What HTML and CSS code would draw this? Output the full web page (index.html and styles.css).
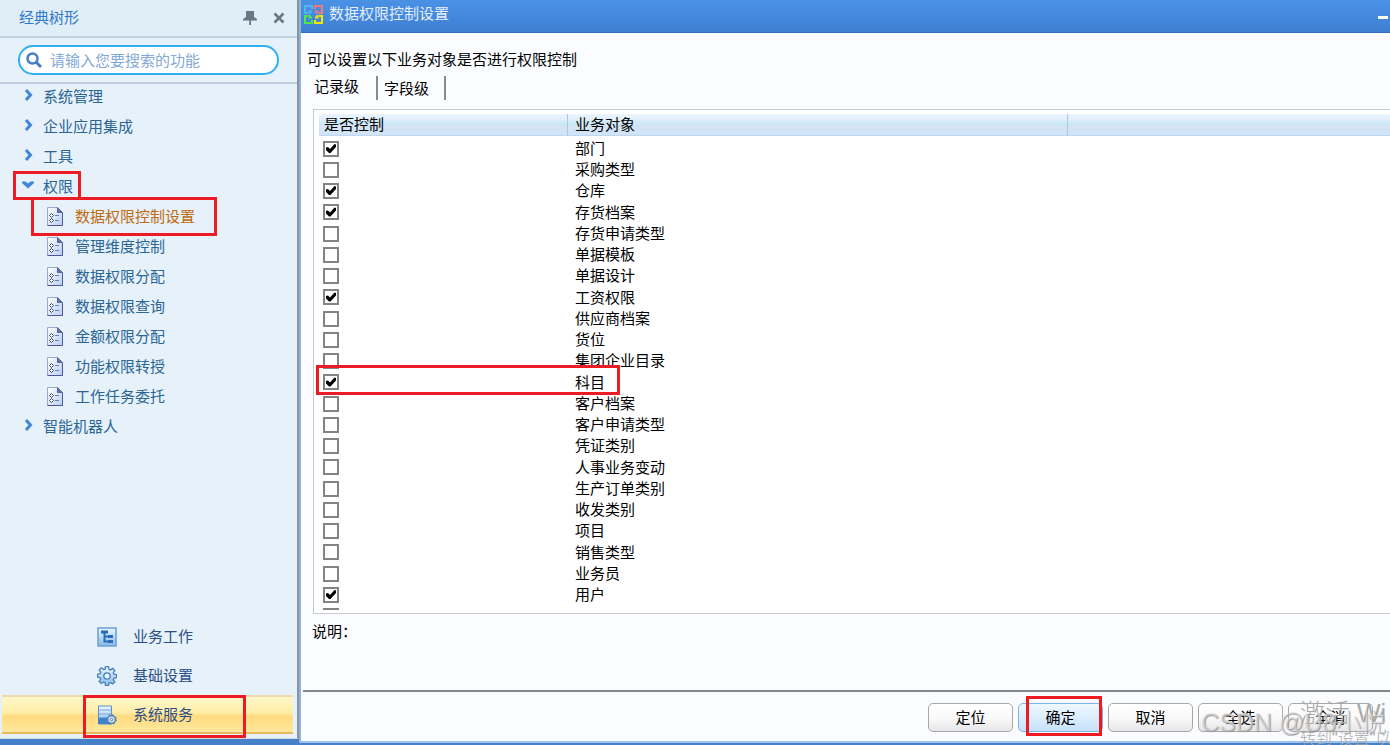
FILE: index.html
```html
<!DOCTYPE html>
<html lang="zh-CN">
<head>
    <meta charset="UTF-8">
    <meta name="viewport" content="width=device-width, initial-scale=1.0">
    <title>数据权限控制设置</title>
    <link rel="stylesheet" href="styles.css">
</head>
<body>
    <!-- Shared icons -->
    <svg class="icon-defs" aria-hidden="true">
        <defs>
            <linearGradient id="paper" x1="0" y1="0" x2="1" y2="1">
                <stop offset="0" stop-color="#ffffff"/>
                <stop offset="1" stop-color="#b9cdf0"/>
            </linearGradient>
            <linearGradient id="sky" x1="0" y1="0" x2="0" y2="1">
                <stop offset="0" stop-color="#eef7ff"/>
                <stop offset="1" stop-color="#86b8ea"/>
            </linearGradient>
        </defs>
        <symbol id="doc" viewBox="0 0 16 19">
            <path d="M.5.5h10l5 5v13H.5z" fill="url(#paper)" stroke="#9aabd0"/>
            <path d="M.5 18.5h15V6" fill="none" stroke="#4f5596"/>
            <path d="M10.500.5v5h5z" fill="#6670ab" stroke="#5c659f"/>
            <path d="M4.500 6.500l2 2-2 2-2-2zM4.500 11.500l2 2-2 2-2-2z" fill="#fff" stroke="#3c4666"/>
            <path d="M8 8.500h4M8 13.500h4" stroke="#5f83c0"/>
        </symbol>
        <symbol id="arrow-right" viewBox="0 0 10 12">
            <path d="M2 1l4.500 5L2 11" fill="none" stroke="#3f86d8" stroke-width="3"/>
        </symbol>
        <symbol id="arrow-down" viewBox="0 0 12 8">
            <path d="M0 0.500h3.500L6 2.500l2.500-2H12v1.500L6 7.500 0 2z" fill="#3f86d8"/>
        </symbol>
    </svg>

    <div class="app">
        <aside class="sidebar">
            <div class="sidebar-header">
                <span class="sidebar-title">经典树形</span>
                <button type="button" class="icon-btn" aria-label="固定">
                    <svg width="14" height="14" viewBox="0 0 14 14"><path d="M3 0h8v6l3 2v1.500H8V14H6.200V9.500H0V8l3-2z" fill="#687782"/></svg>
                </button>
                <button type="button" class="icon-btn" aria-label="关闭">
                    <svg width="12" height="12" viewBox="0 0 12 12"><path d="M1.500 1.500l9 9M10.500 1.500l-9 9" stroke="#687782" stroke-width="2.600"/></svg>
                </button>
            </div>
            <div class="search-area">
                <label class="search-box">
                    <svg width="16" height="16" viewBox="0 0 16 16"><circle cx="6.500" cy="6.500" r="5" fill="none" stroke="#457ec8" stroke-width="2.500"/><path d="M10 10l5 5" stroke="#457ec8" stroke-width="3"/></svg>
                    <input type="text" class="search-input" placeholder="请输入您要搜索的功能" aria-label="搜索功能">
                </label>
            </div>

            <ul class="tree">
                <li><a href="#" class="tree-item"><svg class="arrow"><use href="#arrow-right"/></svg>系统管理</a></li>
                <li><a href="#" class="tree-item"><svg class="arrow"><use href="#arrow-right"/></svg>企业应用集成</a></li>
                <li><a href="#" class="tree-item"><svg class="arrow"><use href="#arrow-right"/></svg>工具</a></li>
                <li>
                    <a href="#" class="tree-item"><svg class="arrow arrow-down"><use href="#arrow-down"/></svg>权限<span class="mark mark-group"></span></a>
                    <ul class="subtree">
                        <li><a href="#" class="tree-item active"><svg class="doc"><use href="#doc"/></svg>数据权限控制设置<span class="mark mark-item"></span></a></li>
                        <li><a href="#" class="tree-item"><svg class="doc"><use href="#doc"/></svg>管理维度控制</a></li>
                        <li><a href="#" class="tree-item"><svg class="doc"><use href="#doc"/></svg>数据权限分配</a></li>
                        <li><a href="#" class="tree-item"><svg class="doc"><use href="#doc"/></svg>数据权限查询</a></li>
                        <li><a href="#" class="tree-item"><svg class="doc"><use href="#doc"/></svg>金额权限分配</a></li>
                        <li><a href="#" class="tree-item"><svg class="doc"><use href="#doc"/></svg>功能权限转授</a></li>
                        <li><a href="#" class="tree-item"><svg class="doc"><use href="#doc"/></svg>工作任务委托</a></li>
                    </ul>
                </li>
                <li><a href="#" class="tree-item"><svg class="arrow"><use href="#arrow-right"/></svg>智能机器人</a></li>
            </ul>

            <nav class="modules">
                <a href="#" class="module">
                    <svg width="20" height="20" viewBox="0 0 20 20"><path d="M1 1h18v18H1z" fill="url(#sky)" stroke="#6c9fd0" stroke-width="1.500"/><path d="M4 3.500h7v3H4zM11 8h5v3h-5zM11 13h5v3h-5z" fill="#2a6db5"/><path d="M7.500 6v8.500H11M7.500 9.500H11" fill="none" stroke="#2a6db5" stroke-width="2"/></svg>
                    业务工作
                </a>
                <a href="#" class="module">
                    <svg width="20" height="20" viewBox="0 0 20 20"><path d="M8.500.7h3l.5 2.600 1.500.6 2.200-1.500 2.100 2.100-1.500 2.200.6 1.500 2.600.5v3l-2.600.5-.6 1.500 1.500 2.200-2.100 2.100-2.200-1.500-1.500.6-.5 2.600h-3L8 16.600 6.500 16l-2.200 1.500-2.100-2.100 1.500-2.200-.6-1.500-2.600-.5v-3l2.600-.5.6-1.500-1.500-2.200 2.100-2.100 2.200 1.500L8 3.300z" fill="url(#sky)" stroke="#467fb9" stroke-width="1.300"/><circle cx="10" cy="10" r="3.200" fill="#e7f2fb" stroke="#467fb9" stroke-width="1.300"/></svg>
                    基础设置
                </a>
                <a href="#" class="module active">
                    <svg width="20" height="20" viewBox="0 0 20 20"><path d="M1.500 1h13v18h-13z" fill="url(#sky)" stroke="#5b8fc8"/><path d="M2 5h12M2 9h12" stroke="#79a8d8"/><path d="M1.500 12.500h13V19h-13z" fill="#3f82cc"/><circle cx="14.500" cy="14.500" r="3.800" fill="#e8f2fc" stroke="#5584b8" stroke-width="1.500"/><circle cx="14.500" cy="14.500" r="4.700" fill="none" stroke="#5584b8" stroke-width="1.300" stroke-dasharray="2 1.700"/><circle cx="14.500" cy="14.500" r="1.300" fill="#fff" stroke="#44719f"/></svg>
                    系统服务<span class="mark mark-module"></span>
                </a>
            </nav>
        </aside>

        <main class="window">
            <header class="title-bar">
                <svg width="19" height="19" viewBox="0 0 19 19" fill="none" stroke-width="2">
                    <path d="M8 4V1H1v7h3M8 6.500H5.500V9" stroke="#55b5ee"/>
                    <path d="M11 4V1h7v7h-3M11 6.500h2.500V9" stroke="#ee7b75"/>
                    <path d="M8 15v3H1v-7h3M8 12.500H5.500V10" stroke="#55e34d"/>
                    <path d="M11 15v3h7v-7h-3M11 12.500h2.500V10" stroke="#f3e600"/>
                </svg>
                <h1 class="window-title">数据权限控制设置</h1>
                <button type="button" class="minimize" aria-label="最小化"></button>
            </header>

            <div class="window-body">
                <p class="hint">可以设置以下业务对象是否进行权限控制</p>
                <div class="tabs" role="tablist">
                    <button type="button" class="tab selected" role="tab" aria-selected="true">记录级</button>
                    <button type="button" class="tab" role="tab" aria-selected="false">字段级</button>
                </div>

                <div class="list-frame">
                    <div class="list-scroll">
                        <table class="list">
                            <thead>
                                <tr><th class="col-check">是否控制</th><th class="col-name">业务对象</th><th></th></tr>
                            </thead>
                            <tbody>
                                <tr><td><input type="checkbox" id="o1" checked></td><td colspan="2"><label for="o1">部门</label></td></tr>
                                <tr><td><input type="checkbox" id="o2"></td><td colspan="2"><label for="o2">采购类型</label></td></tr>
                                <tr><td><input type="checkbox" id="o3" checked></td><td colspan="2"><label for="o3">仓库</label></td></tr>
                                <tr><td><input type="checkbox" id="o4" checked></td><td colspan="2"><label for="o4">存货档案</label></td></tr>
                                <tr><td><input type="checkbox" id="o5"></td><td colspan="2"><label for="o5">存货申请类型</label></td></tr>
                                <tr><td><input type="checkbox" id="o6"></td><td colspan="2"><label for="o6">单据模板</label></td></tr>
                                <tr><td><input type="checkbox" id="o7"></td><td colspan="2"><label for="o7">单据设计</label></td></tr>
                                <tr><td><input type="checkbox" id="o8" checked></td><td colspan="2"><label for="o8">工资权限</label></td></tr>
                                <tr><td><input type="checkbox" id="o9"></td><td colspan="2"><label for="o9">供应商档案</label></td></tr>
                                <tr><td><input type="checkbox" id="o10"></td><td colspan="2"><label for="o10">货位</label></td></tr>
                                <tr><td><input type="checkbox" id="o11"></td><td colspan="2"><label for="o11">集团企业目录</label></td></tr>
                                <tr class="marked"><td><input type="checkbox" id="o12" checked><span class="mark mark-row"></span></td><td colspan="2"><label for="o12">科目</label></td></tr>
                                <tr><td><input type="checkbox" id="o13"></td><td colspan="2"><label for="o13">客户档案</label></td></tr>
                                <tr><td><input type="checkbox" id="o14"></td><td colspan="2"><label for="o14">客户申请类型</label></td></tr>
                                <tr><td><input type="checkbox" id="o15"></td><td colspan="2"><label for="o15">凭证类别</label></td></tr>
                                <tr><td><input type="checkbox" id="o16"></td><td colspan="2"><label for="o16">人事业务变动</label></td></tr>
                                <tr><td><input type="checkbox" id="o17"></td><td colspan="2"><label for="o17">生产订单类别</label></td></tr>
                                <tr><td><input type="checkbox" id="o18"></td><td colspan="2"><label for="o18">收发类别</label></td></tr>
                                <tr><td><input type="checkbox" id="o19"></td><td colspan="2"><label for="o19">项目</label></td></tr>
                                <tr><td><input type="checkbox" id="o20"></td><td colspan="2"><label for="o20">销售类型</label></td></tr>
                                <tr><td><input type="checkbox" id="o21"></td><td colspan="2"><label for="o21">业务员</label></td></tr>
                                <tr><td><input type="checkbox" id="o22" checked></td><td colspan="2"><label for="o22">用户</label></td></tr>
                                <tr><td><input type="checkbox" id="o23" aria-label="业务对象"></td><td colspan="2"></td></tr>
                            </tbody>
                        </table>
                    </div>
                </div>
                <p class="note">说明：</p>
            </div>

            <footer class="actions">
                <button type="button" class="btn">定位</button>
                <button type="button" class="btn primary">确定<span class="mark mark-btn"></span></button>
                <button type="button" class="btn">取消</button>
                <button type="button" class="btn">全选</button>
                <button type="button" class="btn">全消</button>
            </footer>
        </main>

        <!-- Watermarks over the bottom right corner -->
        <div class="activate">
            <div class="activate-title">激活 Wi</div>
            <div class="activate-text">转到"设置"以</div>
        </div>
        <div class="csdn">CSDN @U8小悦</div>
    </div>
</body>
</html>
```

FILE: styles.css
```css
* {
    box-sizing: border-box;
}
body, html {
    margin: 0;
    padding: 0;
    height: 100%;
}
body {
    font-family: "Liberation Sans", "Noto Sans CJK SC", sans-serif;
    font-size: 15px;
    line-height: 20px;
    color: #000;
}
button, input {
    font: inherit;
    color: inherit;
}
button {
    padding: 0;
    border: none;
    background: none;
}
a {
    color: inherit;
    text-decoration: none;
}
ul, p, h1 {
    margin: 0;
    padding: 0;
    list-style: none;
}
.icon-defs {
    position: absolute;
    width: 0;
    height: 0;
}
.app {
    position: relative;
    display: flex;
    height: 100vh;
    padding-bottom: 2px;
    overflow: hidden;
    background-color: #4580c8;
}

/* Left panel */
.sidebar {
    display: flex;
    flex-direction: column;
    flex: none;
    width: 299px;
    margin-bottom: 4px;
    padding-bottom: 4px;
    border-right: 2px solid #8b939b;
    border-bottom: 1px solid #d5d9de;
    background-color: #e6f1fa;
}
.sidebar-header {
    display: flex;
    align-items: center;
    gap: 16px;
    height: 38px;
    padding: 0 12px 0 19px;
    border-bottom: 2px solid #c3d2e1;
    background-color: #e0eef7;
}
.sidebar-title {
    flex: 1;
    color: #2f78cc;
}
.icon-btn {
    display: flex;
}
.search-area {
    height: 46px;
    padding: 7px 18px;
    border-bottom: 2px solid #bccddf;
}
.search-box {
    display: flex;
    align-items: center;
    gap: 8px;
    height: 30px;
    padding: 0 6px;
    border: 2px solid #2fb0f5;
    border-radius: 15px;
    background-color: #fff;
}
.search-input {
    flex: 1;
    min-width: 0;
    padding: 2px 0 0;
    border: none;
    outline: none;
    background: none;
}
.search-input::placeholder {
    color: #83a9d6;
}

/* Function tree */
.tree {
    flex: 1;
}
.tree-item {
    position: relative;
    display: flex;
    align-items: center;
    height: 26px;
    margin-bottom: 4px;
    padding-left: 22px;
    color: #2a6595;
}
.subtree .tree-item {
    padding-left: 47px;
}
.tree-item.active {
    color: #c06a10;
}
.arrow {
    width: 10px;
    height: 12px;
    margin: 0 9px 4px 2px;
}
.arrow-down {
    width: 12px;
    height: 8px;
    margin: 0 9px 4px 0;
}
.doc {
    width: 16px;
    height: 19px;
    margin: 0 12px 2px 0;
}

/* Module switch */
.module {
    position: relative;
    display: flex;
    align-items: center;
    gap: 16px;
    height: 39px;
    margin: 0 4px 0 2px;
    padding-left: 95px;
    color: #2b4f86;
}
.module.active {
    border-top: 2px solid #f0d9ab;
    border-bottom: 2px solid #e8b95e;
    background: linear-gradient(#fff8cc, #ffeda6 45%, #ffdb80 55%, #ffe89c);
}

/* Main window */
.window {
    display: flex;
    flex-direction: column;
    flex: 1;
    min-width: 0;
    border-left: 2px solid #8db3e3;
    border-bottom: 2px solid #9cc3ee;
    background-color: #fbfcff;
}
.title-bar {
    display: flex;
    align-items: center;
    gap: 6px;
    height: 33px;
    padding: 0 2px 4px 3px;
    border-bottom: 1px solid #3470c0;
    background: linear-gradient(#4a92e6, #3f7fd2);
}
.window-title {
    flex: 1;
    font-size: 15px;
    font-weight: normal;
    color: #e4effc;
}
.minimize {
    width: 10px;
    height: 3px;
    margin-top: 6px;
    background-color: #fff;
}
.window-body {
    display: flex;
    flex-direction: column;
    flex: 1;
    min-height: 0;
    padding: 17px 0 0 6px;
}
.tabs {
    display: flex;
    height: 24px;
    margin: 6px 0 9px;
}
.tab {
    width: 68px;
    padding: 1px 0 0 6px;
    border-right: 2px solid #8a8a8a;
    text-align: left;
}
.tab.selected {
    width: 71px;
    padding: 0 0 2px 7px;
}

/* Object list */
.list-frame {
    flex: 1;
    min-height: 0;
    margin-left: 6px;
    padding: 4px 0 3px;
    border: 1px solid #c8ccd2;
    border-right: none;
    background-color: #fff;
}
.list-scroll {
    height: 100%;
    padding-left: 5px;
    overflow: hidden;
}
.list {
    width: 100%;
    table-layout: fixed;
    border-collapse: separate;
    border-spacing: 0;
    line-height: 21px;
}
.list th {
    height: 21px;
    padding: 0 0 0 5px;
    border-bottom: 1px solid #bcd8f2;
    background: linear-gradient(#eaf5fe, #dfedfa 33%, #cdebf9 34%, #cdebf9 48%, #d2e4f6 50%);
    font-weight: normal;
    text-align: left;
}
.list .col-check {
    width: 249px;
}
.list .col-name {
    width: 500px;
    padding-left: 7px;
}
.list .col-check, .list .col-name {
    border-right: 1px solid #a9c8e6;
}
.list tbody::before {
    content: "";
    display: table-row;
    height: 2px;
}
.list td {
    height: 21px;
    padding: 0 0 0 4px;
    vertical-align: middle;
}
.list td + td {
    padding-left: 7px;
}
/* the row grid is slightly looser than 21px */
.list tr:nth-child(4n) td {
    height: 22px;
}
.list label {
    display: block;
}
.list input {
    display: block;
    appearance: none;
    width: 16px;
    height: 16px;
    margin: 0;
    border: 2px solid #848484;
    background-color: #fff;
}
.list input:checked::before {
    content: "";
    display: block;
    width: 10px;
    height: 10px;
    margin: 1px;
    background-color: #000;
    clip-path: polygon(0 40%, 20% 35%, 40% 55%, 85% 5%, 100% 10%, 100% 35%, 45% 95%, 30% 95%, 0 65%);
}
.list .marked {
    position: relative;
}
.note {
    height: 76px;
    padding: 8px 0 0 5px;
}

/* Bottom buttons */
.actions {
    display: flex;
    justify-content: flex-end;
    gap: 5px;
    height: 51px;
    margin-left: 2px;
    padding: 11px 17px 0 0;
    border-top: 2px solid #858888;
}
.btn {
    position: relative;
    width: 85px;
    height: 29px;
    border: 1px solid #a8a8a8;
    border-radius: 5px;
    background: linear-gradient(#fff, #fafafa 50%, #e6e6e8);
}
.btn.primary {
    border-color: #7db4e8;
    background: linear-gradient(#eef8ff, #dceefe 50%, #c6e2fb);
}

/* Red frames */
.mark {
    position: absolute;
    border: 3px solid #ed1c24;
    pointer-events: none;
}
.mark-group {
    top: -3px;
    left: 13px;
    width: 68px;
    height: 29px;
}
.mark-item {
    top: -7px;
    left: 31px;
    width: 186px;
    height: 39px;
    z-index: 1;
}
.mark-module {
    top: -2px;
    left: 81px;
    width: 163px;
    height: 43px;
}
.mark-row {
    top: -6px;
    left: -3px;
    width: 304px;
    height: 30px;
}
.mark-btn {
    top: -8px;
    left: 7px;
    width: 76px;
    height: 40px;
}

/* Watermarks */
.activate, .csdn {
    position: absolute;
    white-space: nowrap;
    pointer-events: none;
}
.activate {
    left: calc(100% - 90px);
    bottom: -4px;
    font-weight: 300;
    color: #a9a9a9;
}
.activate-title {
    font-size: 25px;
    line-height: 32px;
}
.activate-text {
    font-size: 16px;
    line-height: 20px;
}
.csdn {
    right: 4px;
    bottom: 8px;
    font-size: 25px;
    font-weight: 300;
    line-height: 30px;
    color: rgba(225, 225, 225, 0.6);
    text-shadow: 1px 1px 1px #999;
}
```
